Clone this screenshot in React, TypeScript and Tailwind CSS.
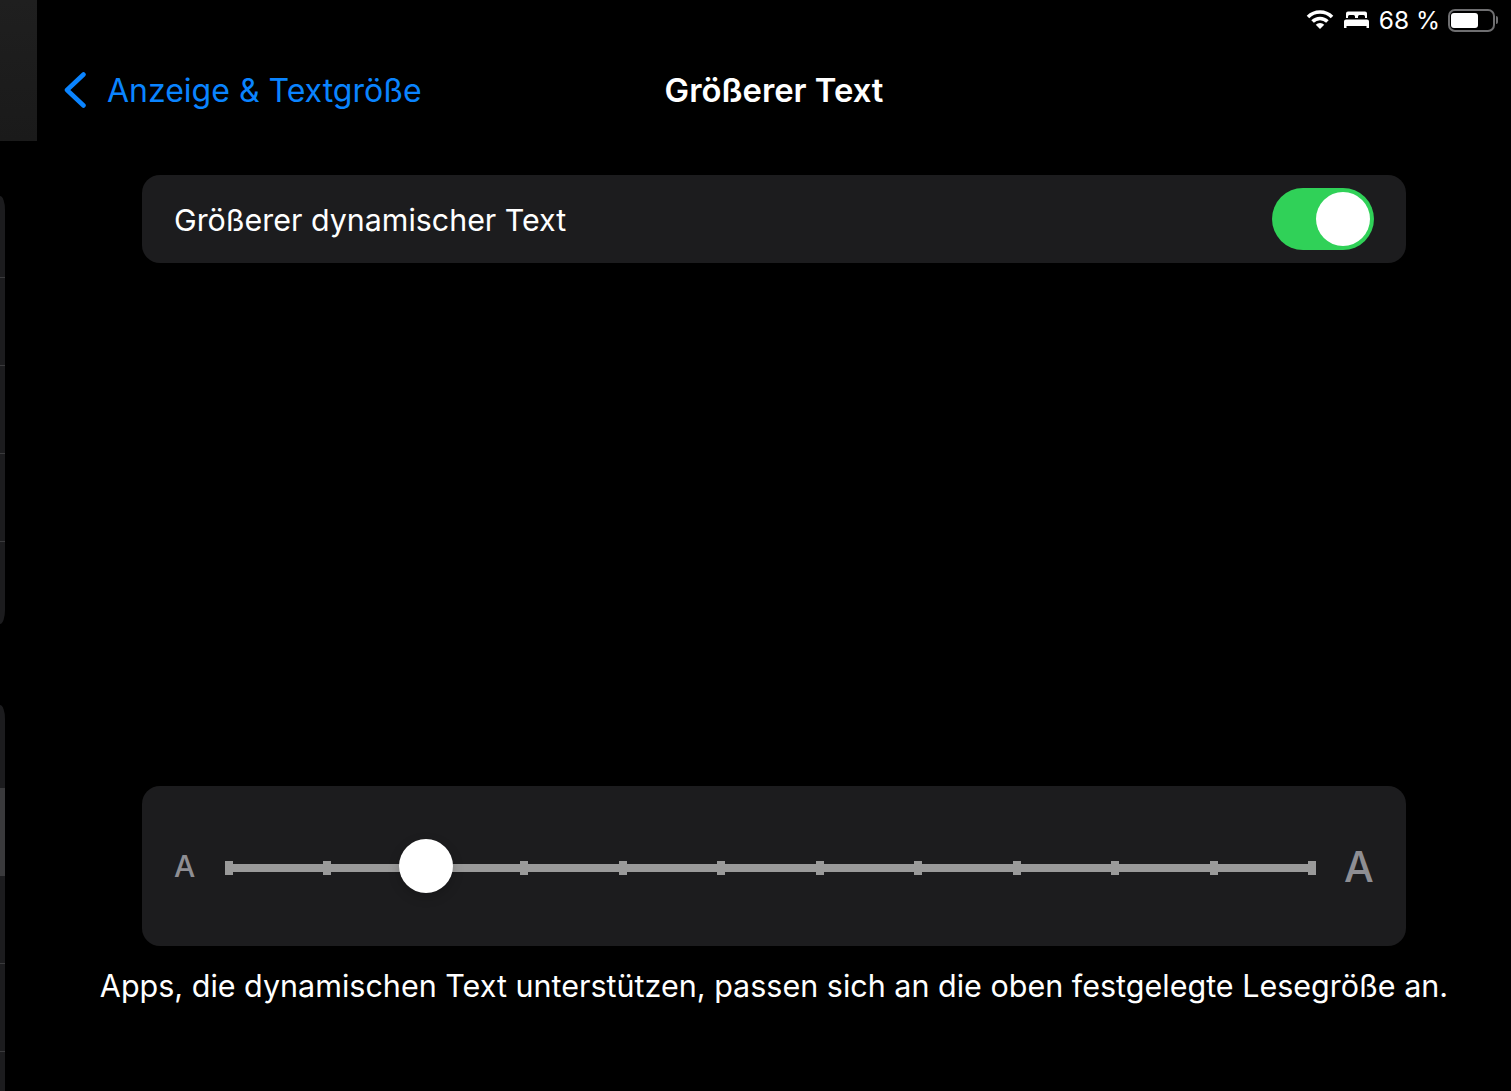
const ticks = Array.from({ length: 12 })

function SidebarRow() {
  return <div className="h-[88px] border-b border-[#3a3a3c]" />
}

function Sidebar() {
  return (
    <div className="flex w-[37px] shrink-0 flex-col">
      <div className="h-[141px] bg-gradient-to-b from-[#1f1f1f] to-[#1a1a1a]" />
      <div className="mt-[55px] w-[5px] overflow-hidden rounded-tr-[5px_14px] rounded-br-[5px_14px] bg-[#1c1c1e]">
        <div className="h-[82px] border-b border-[#3a3a3c]" />
        <SidebarRow />
        <SidebarRow />
        <SidebarRow />
        <div className="h-[82px]" />
      </div>
      <div className="mt-[81px] w-[5px] flex-1 rounded-tr-[5px_14px] bg-[#1c1c1e]">
        <div className="h-[83px]" />
        <div className="h-[88px] bg-[#3a3a3c]" />
        <SidebarRow />
        <SidebarRow />
      </div>
    </div>
  )
}

function StatusBar() {
  return (
    <div className="flex h-[40px] items-center justify-end pr-[13px] text-white">
      <svg width="28" height="22" viewBox="0 0 28 22" fill="none" stroke="currentColor" strokeWidth="3.600">
        <path d="M1.980 7.980a17 17 0 0 1 24.040 0" />
        <path d="M6.580 12.580a10.500 10.500 0 0 1 14.840 0" />
        <path d="M14 20l-4.240-4.240a6 6 0 0 1 8.480 0z" fill="currentColor" stroke="none" />
      </svg>
      <svg width="25" height="20" viewBox="0 0 25 20" fill="currentColor" className="ml-[10px]">
        <path d="M4 1.500h17A2 2 0 0 1 23 3.500V8h-2V6.500A1.500 1.500 0 0 0 19.500 5h-4A1.500 1.500 0 0 0 14 6.500V8h-3V6.500A1.500 1.500 0 0 0 9.500 5h-4A1.500 1.500 0 0 0 4 6.500V8H2V3.500A2 2 0 0 1 4 1.500z" />
        <path d="M2 9.500h21a2 2 0 0 1 2 2V18h-2.500v-2h-20v2H0v-6.500a2 2 0 0 1 2-2z" />
      </svg>
      <span className="ml-[10px] text-[24.500px] leading-none">68 %</span>
      <div className="ml-[8px] flex items-center gap-[1px]">
        <div className="h-[23px] w-[47px] rounded-[7px] border-2 border-[#6e6e70] p-[2px] pl-[1px]">
          <div className="h-full w-[27px] rounded-[3px] bg-white" />
        </div>
        <div className="h-[8px] w-[2px] rounded-r-full bg-[#6e6e70]" />
      </div>
    </div>
  )
}

function NavBar() {
  return (
    <div className="grid h-[100px] grid-cols-[1fr_auto_1fr] items-center px-[27px]">
      <div className="flex items-center gap-[21px] text-[#0a84ff]">
        <svg width="22" height="36" viewBox="0 0 22 36" fill="none" stroke="currentColor" strokeWidth="4.500" strokeLinecap="round" strokeLinejoin="round" className="shrink-0">
          <path d="M19.500 2.500 3 18l16.500 15.500" />
        </svg>
        <span className="translate-y-px text-[32px] leading-none">Anzeige &amp; Textgröße</span>
      </div>
      <h1 className="text-[32.800px] leading-none font-semibold text-white">Größerer Text</h1>
      <div />
    </div>
  )
}

function SizeSlider() {
  return (
    <div className="relative mt-[4px] mr-[28px] ml-[31px] flex h-[14px] flex-1 items-center justify-between">
      <div className="absolute inset-x-0 top-[3px] h-[8px] bg-[#9a9a9a]" />
      {ticks.map((_, i) => (
        <div key={i} className="relative h-[14px] w-[8px] bg-[#9a9a9a]" />
      ))}
      <div className="absolute top-[-22px] left-[174px] h-[54px] w-[54px] rounded-full bg-white shadow-[0_4px_12px_rgba(0,0,0,0.2)]" />
    </div>
  )
}

export default function App() {
  return (
    <div className="flex h-[1091px] w-[1511px] overflow-hidden bg-black font-['Inter',sans-serif]">
      <Sidebar />
      <div className="flex flex-1 flex-col">
        <StatusBar />
        <NavBar />

        <div className="mx-[105px] mt-[35px] flex h-[88px] items-center justify-between rounded-[18px] bg-[#1c1c1e] pr-[32px] pl-[32px]">
          <span className="translate-y-px text-[30.400px] leading-none text-white">Größerer dynamischer Text</span>
          <div className="flex h-[62px] w-[102px] items-center justify-end rounded-full bg-[#30d158] pr-[4px]">
            <div className="h-[54px] w-[54px] rounded-full bg-white" />
          </div>
        </div>

        <div className="mx-[105px] mt-[523px] flex h-[160px] items-center rounded-[18px] bg-[#1c1c1e] pr-[34px] pl-[32px]">
          <span className="w-[20px] text-[30px] font-medium text-[#8e8e93]">A</span>
          <SizeSlider />
          <span className="w-[28px] text-[42px] font-medium text-[#8e8e93]">A</span>
        </div>

        <p className="mt-[21px] text-center text-[30.500px] leading-[38px] text-white">
          Apps, die dynamischen Text unterstützen, passen sich an die oben festgelegte Lesegröße an.
        </p>
      </div>
    </div>
  )
}
